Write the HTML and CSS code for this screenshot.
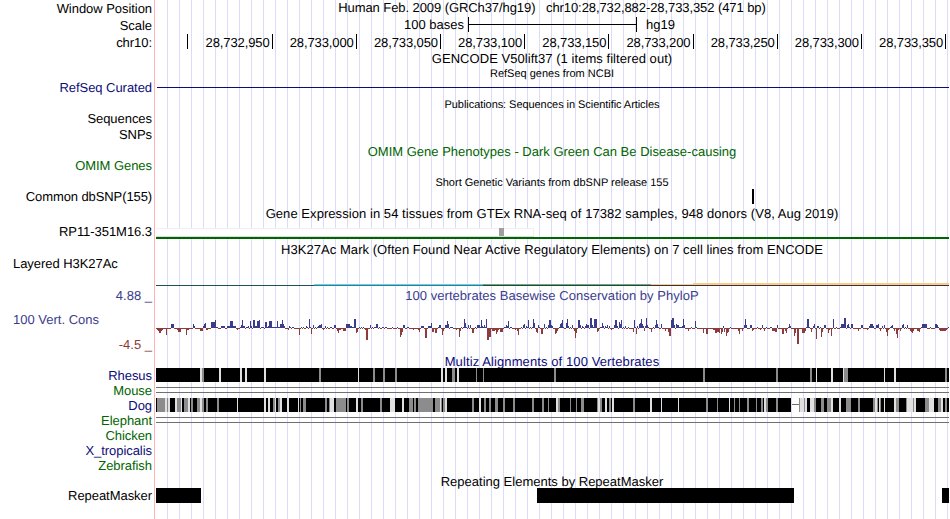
FILE: index.html
```
<!DOCTYPE html>
<html lang="en">
<head>
	<meta charset="UTF-8">
	<title>chr10:28,732,882-28,733,352</title>
	<link rel="stylesheet" href="styles.css">
</head>
<body>
	<div class="browser">
		<div class="row position">
			<div class="label">Window Position</div>
			<div class="data title">Human Feb. 2009 (GRCh37/hg19) &nbsp; chr10:28,732,882-28,733,352 (471 bp)</div>
		</div>
		<div class="row scale">
			<div class="label">Scale</div>
			<div class="data">
				<span class="bases">100 bases</span>
				<span class="scaleBar"></span>
				<span class="db">hg19</span>
			</div>
		</div>
		<div class="row ruler">
			<div class="label">chr10:</div>
			<div class="data">
				<span class="tick first"></span>
				<span class="tick">28,732,950</span>
				<span class="tick">28,733,000</span>
				<span class="tick">28,733,050</span>
				<span class="tick">28,733,100</span>
				<span class="tick">28,733,150</span>
				<span class="tick">28,733,200</span>
				<span class="tick">28,733,250</span>
				<span class="tick">28,733,300</span>
				<span class="tick">28,733,350</span>
			</div>
		</div>
		<div class="row gencode">
			<div class="label"></div>
			<div class="data title">GENCODE V50lift37 (1 items filtered out)</div>
		</div>
		<div class="row refseqTitle">
			<div class="label"></div>
			<div class="data title small">RefSeq genes from NCBI</div>
		</div>
		<div class="row refseq">
			<div class="label navy">RefSeq Curated</div>
			<div class="data"><svg id="refseq" width="794" height="15" viewBox="155 80 794 15"></svg></div>
		</div>
		<div class="row pubsTitle">
			<div class="label"></div>
			<div class="data title small">Publications: Sequences in Scientific Articles</div>
		</div>
		<div class="row sequences">
			<div class="label">Sequences</div>
		</div>
		<div class="row snps">
			<div class="label">SNPs</div>
		</div>
		<div class="row omimTitle">
			<div class="label"></div>
			<div class="data title green">OMIM Gene Phenotypes - Dark Green Can Be Disease-causing</div>
		</div>
		<div class="row omim">
			<div class="label green">OMIM Genes</div>
		</div>
		<div class="row dbsnpTitle">
			<div class="label"></div>
			<div class="data title small">Short Genetic Variants from dbSNP release 155</div>
		</div>
		<div class="row dbsnp">
			<div class="label">Common dbSNP(155)</div>
			<div class="data"><svg id="dbsnp" width="794" height="15" viewBox="155 189 794 15"></svg></div>
		</div>
		<div class="row gtexTitle">
			<div class="label"></div>
			<div class="data title">Gene Expression in 54 tissues from GTEx RNA-seq of 17382 samples, 948 donors (V8, Aug 2019)</div>
		</div>
		<div class="row gtex">
			<div class="label">RP11-351M16.3</div>
			<div class="data"><svg id="gtex" width="794" height="20" viewBox="155 222 794 20"></svg></div>
		</div>
		<div class="row h3kTitle">
			<div class="label"></div>
			<div class="data title">H3K27Ac Mark (Often Found Near Active Regulatory Elements) on 7 cell lines from ENCODE</div>
		</div>
		<div class="row h3k">
			<div class="label left">Layered H3K27Ac</div>
			<div class="data"><svg id="h3k" width="794" height="32" viewBox="155 256 794 32"></svg></div>
		</div>
		<div class="row cons">
			<div class="label consLabels">
				<div class="max blue">4.88 _</div>
				<div class="name blue">100 Vert. Cons</div>
				<div class="min red">-4.5 _</div>
			</div>
			<div class="data">
				<div class="title blue">100 vertebrates Basewise Conservation by PhyloP</div>
				<svg id="phylop" width="794" height="50" viewBox="155 304 794 50"></svg>
			</div>
		</div>
		<div class="row multizTitle">
			<div class="label"></div>
			<div class="data title navy">Multiz Alignments of 100 Vertebrates</div>
		</div>
		<div class="row species">
			<div class="label navy">Rhesus</div>
			<div class="data"><svg id="rhesus" width="794" height="15" viewBox="155 0 794 15"></svg></div>
		</div>
		<div class="row species">
			<div class="label green">Mouse</div>
			<div class="data"><div class="noAlign"></div></div>
		</div>
		<div class="row species">
			<div class="label navy">Dog</div>
			<div class="data"><svg id="dog" width="794" height="15" viewBox="155 0 794 15"></svg></div>
		</div>
		<div class="row species">
			<div class="label green">Elephant</div>
			<div class="data"><div class="noAlign"></div></div>
		</div>
		<div class="row species">
			<div class="label green">Chicken</div>
		</div>
		<div class="row species">
			<div class="label navy">X_tropicalis</div>
		</div>
		<div class="row species">
			<div class="label green">Zebrafish</div>
		</div>
		<div class="row rmskTitle">
			<div class="label"></div>
			<div class="data title">Repeating Elements by RepeatMasker</div>
		</div>
		<div class="row rmsk">
			<div class="label">RepeatMasker</div>
			<div class="data"><svg id="rmsk" width="794" height="15" viewBox="155 0 794 15"></svg></div>
		</div>
	</div>
	<script src="tracks.js"></script>
</body>
</html>
```
FILE: styles.css
```
html, body {
	margin: 0;
	padding: 0;
	background: #fff;
}
body {
	overflow: hidden;
}
.browser {
	box-sizing: border-box;
	width: 949px;
	height: 519px;
	font-family: "Liberation Sans", Arial, Helvetica, sans-serif;
	font-size: 13px;
	color: #000;
	white-space: nowrap;
	text-rendering: geometricPrecision;
	/* red separator, then a guide line every 12px */
	background:
		linear-gradient(#ffb4b4, #ffb4b4) 154px 0 / 1px 100% no-repeat,
		repeating-linear-gradient(to right, #dcdcf8 0, #dcdcf8 1px, transparent 1px, transparent 12px) 167px 0 / 782px 100% no-repeat;
}
.row {
	display: flex;
	height: 15px;
	line-height: 15px;
}
.label {
	flex: none;
	box-sizing: border-box;
	width: 155px;
	padding-right: 3px;
	letter-spacing: -0.05px;
	text-align: right;
}
.label.left {
	padding-left: 13px;
	text-align: left;
}
.data {
	flex: none;
	width: 794px;
}
.data svg {
	display: block;
	shape-rendering: crispEdges;
}
.title {
	text-align: center;
}
.small {
	font-size: 11px;
}
.navy {
	color: #0c0c78;
}
.green {
	color: #006400;
}
.blue {
	color: #3c3c8c;
}
.red {
	color: #8c3c3c;
}
.position {
	height: 16px;
	line-height: 17px;
}
.position .title {
	line-height: 15px;
	letter-spacing: -0.08px;
}
.scale {
	height: 18px;
	line-height: 19px;
}
.scale .data {
	display: flex;
	line-height: 17px;
}
.bases {
	width: 309px;
	text-align: right;
}
.scaleBar {
	box-sizing: border-box;
	width: 169px;
	height: 15px;
	margin: 1px 9px 0 4px;
	border: solid #000;
	border-width: 0 1px;
	background: linear-gradient(#000, #000) 0 7px / 100% 1px no-repeat;
}
.ruler {
	height: 17px;
	line-height: 17px;
}
.ruler .data {
	display: flex;
}
.tick {
	flex: none;
	box-sizing: border-box;
	width: 84.19px;
	height: 15px;
	padding-right: 2px;
	border-right: 1px solid #000;
	letter-spacing: -0.1px;
	text-align: right;
}
.tick.first {
	width: 33.4px;
}
.gencode .title {
	letter-spacing: 0.05px;
}
.refseqTitle {
	height: 14px;
	line-height: 16px;
}
.pubsTitle {
	height: 16px;
	line-height: 20px;
	letter-spacing: -0.06px;
}
.snps {
	height: 16px;
	line-height: 17px;
}
.omimTitle {
	height: 16px;
	line-height: 19px;
}
.dbsnpTitle {
	height: 16px;
	line-height: 20px;
}
.dbsnp .label {
	letter-spacing: -0.1px;
}
.gtexTitle {
	height: 18px;
	line-height: 19px;
	letter-spacing: 0.06px;
}
.gtex {
	height: 20px;
	line-height: 19px;
}
.h3kTitle {
	height: 14px;
	letter-spacing: 0.05px;
}
.h3k {
	height: 32px;
}
.cons {
	height: 66px;
}
.cons .title {
	height: 16px;
	letter-spacing: 0.03px;
}
.consLabels {
	display: flex;
	flex-direction: column;
	letter-spacing: 0;
}
.consLabels .max {
	height: 16px;
}
.consLabels .name {
	height: 32px;
	padding-left: 13px;
	line-height: 31px;
	text-align: left;
}
.consLabels .min {
	line-height: 18px;
}
.multizTitle {
	height: 14px;
	letter-spacing: 0.1px;
}
.noAlign {
	height: 4px;
	margin: 4px 0 0 1px;
	border: solid #707070;
	border-width: 1px 0;
}
.rmskTitle {
	line-height: 17px;
}
```
FILE: tracks.js
```
var SVG = "http://www.w3.org/2000/svg";

function box(id, x, y, w, h, color) {
	var r = document.createElementNS(SVG, "rect");
	r.setAttribute("x", x);
	r.setAttribute("y", y);
	r.setAttribute("width", w);
	r.setAttribute("height", h);
	r.setAttribute("fill", color);
	document.getElementById(id).appendChild(r);
}

// "x,width" pairs separated by spaces
function stripes(id, list, color, height) {
	list.split(" ").forEach(function(item) {
		var p = item.split(",");
		box(id, +p[0], 0, +p[1], height, color);
	});
}

box("refseq", 157, 87, 792, 1, "#0c0c78");
box("dbsnp", 752, 189, 2, 15, "#000");

box("gtex", 156, 228, 378, 9, "#f0f0f0");
box("gtex", 156, 229, 377, 7, "#fff");
box("gtex", 156, 236, 378, 1, "#dcdcdc");
box("gtex", 499, 228, 5, 8, "#a0a0a0");
box("gtex", 156, 237, 793, 2, "#006400");

box("h3k", 156, 285, 158, 1, "#205058");
box("h3k", 314, 284, 169, 1, "#66ccff");
box("h3k", 314, 285, 169, 1, "#308080");
box("h3k", 483, 284, 168, 1, "#70a870");
box("h3k", 483, 285, 168, 1, "#204848");
box("h3k", 651, 284, 42, 1, "#ffcc78");
box("h3k", 693, 283, 256, 2, "#ffcc78");
box("h3k", 651, 285, 298, 1, "#303058");

// PhyloP scores: "x,height" or "x-x2,height", everything else sits just below zero
var scores = "157,-2 158,-3 159-160,-5 161,-3 162,-2 166,-7 171-173,4 177,-2 178-180,-4 186,-7 187-188,-2 193,4 194,2 " +
	"200-202,-3 203,2 204,4 205,5 206-207,-2 211-214,6 215,8 216-217,1 221-224,2 227-229,2 230-232,7 233-235,2 237,-2 240,1 " +
	"241,3 242,8 243-244,2 246-247,1 248,2 250,7 251,2 253-254,8 255-256,2 257-258,7 259,8 261-263,1 265-266,6 267,1 " +
	"268,2 269-271,7 272-276,1 277,7 278-279,1 280-281,4 282,8 283,4 284,2 288,-2 289,2 290,1 292-293,1 299,-7 301,1 303,1 " +
	"306,2 307,1 309,9 310,1 311,-6 313,3 315,1 317,1 318,2 319-320,3 321,4 323,-2 325,2 327,1 330-331,1 334-335,3 337,-3 " +
	"338,-5 339-340,-2 343-345,-3 346-349,4 350-351,2 352-353,1 354-355,9 356,-5 357,-4 359,1 361,1 363,1 365,-2 366-367,-12 " +
	"370,3 372,1 374-375,1 376-377,4 379,1 382-383,1 385-386,1 392,1 397,1 400,-9 401,-7 402,-4 403-404,3 407-408,1 413,-2 " +
	"418,-2 419,-4 421-423,2 425-426,-10 428-430,2 431,5 432-433,-4 435-436,-5 438,1 439-440,3 442,-7 443,-3 445-446,3 " +
	"447,7 448,4 450-452,1 456,-2 459,-9 460,-3 461,1 463,1 464,9 465,5 466,1 468,3 470,3 472-473,-5 475,1 477-479,3 480,1 481,8 " +
	"482,2 483,1 484,3 485,1 486,9 487-488,-12 489-490,-9 492-494,-3 495,-2 496,-6 497,-4 498,-2 500-501,-4 502,-4 504-505,1 " +
	"506,3 507,2 508,7 510-511,1 515,-2 517,-3 518,-7 521,1 523,3 524,4 526,2 527,1 528,8 530,1 532,1 533,9 534,5 536,-4 " +
	"537,-5 538,3 539,1 541-542,-6 544,4 546,1 548,3 549,8 550,8 551,3 552,2 555,-6 556,-5 557,-3 559,1 560,4 561,5 562,8 " +
	"563,1 566,5 567,9 568,2 570,1 572,3 574,-3 575,-10 576,-5 578-579,8 580,3 582,2 583,1 585,2 586,4 587-588,3 590-591,10 " +
	"592,3 593,1 594-596,9 597,-4 598,-3 600-601,1 602,5 603,2 605,2 606,1 607,3 609,2 611,-2 614,3 615-616,8 617,2 619,6 " +
	"620,4 621,8 623,1 625,2 628,1 633,-4 634,8 635,1 636,-6 637,2 639,4 640,5 641,9 642,4 643,2 644,-3 645,2 646,10 647,3 648,1 " +
	"651,-4 653,1 655,3 656,8 657,4 658,1 661,4 665,-3 668,-4 669-670,-8 671,8 672-673,10 674,3 676,4 677-678,3 679-681,1 " +
	"682,2 683,9 684,3 688,-3 691,1 695,7 696,1 703,-5 706-707,-6 713-714,-2 715-716,-5 717-718,-4 719,-5 721,-6 722,-4 " +
	"723,2 724,-4 726,-8 727,-5 728,-4 730,1 738,-3 739,-6 742,-3 744,3 745,9 746,3 750-751,3 752,-3 753,-2 757,1 760,-2 762,3 " +
	"764,-3 766,1 770-771,1 772-774,-3 775-776,-4 777,3 782-783,-6 785,-3 786,-5 788,1 789,4 790,2 794,-8 795,-5 797-798,-16 " +
	"802-804,-5 805,-3 806,1 807-808,9 809,1 811,-4 813,2 814,4 816,-11 817-818,2 820,1 821,-9 822,-4 824-825,3 828,-5 829,-2 " +
	"831,-8 833,9 836,1 840,1 841-843,4 844-845,10 847,3 848,4 849,1 851-852,4 858,-3 861,3 862,3 867,-2 869,2 870-872,4 873,2 " +
	"876-877,3 878,4 880,-3 882,2 884,3 886,-4 887,-8 888,-2 890,1 891,2 892,3 894,-3 896,-6 897,-10 898,-2 900,-3 902,3 903,4 " +
	"905,1 907,3 910,-3 911,-4 912,-5 913,-3 917-918,-3 919,-4 921,1 922-926,4 930,1 935,4 936,4 937,3 938,1 939,-2 940-945,-3 " +
	"946,-2 948,1";

var heights = {};
scores.split(" ").forEach(function(item) {
	var p = item.split(",");
	var x = p[0].split("-");
	for (var i = +x[0]; i <= +(x[1] || x[0]); i ++) {
		heights[i] = +p[1];
	}
});
for (var i = 156; i < 949; i ++) {
	var h = heights[i] || -1;
	if (h > 0) {
		box("phylop", i, 328 - h, 1, h, "#3c3c8c");
	} else {
		box("phylop", i, 328, 1, -h, "#8c3c3c");
	}
}

box("rhesus", 156, 0, 793, 14, "#000");
stripes("rhesus", "200,2 219,2 240,2 245,2 264,2 358,1 441,2 445,2 457,2 816,1 831,2 843,1 884,1 894,2", "#e0e0e0", 14);
stripes("rhesus", "202,2 319,2 373,2 383,2 395,2 452,3 476,1 483,1 554,2 703,2 776,2 810,2 844,4 945,2", "#8c8c8c", 14);

box("dog", 156, 0, 635, 14, "#000");
box("dog", 792, 6, 7, 1, "#707070");
box("dog", 799, 0, 150, 14, "#000");
stripes("dog", "165,2 168,2 175,2 181,1 188,2 200,2 237,1 264,2 268,2 275,1 280,2 287,2 298,1 330,4 356,2 390,5 402,2 " +
	"440,1 445,2 479,2 556,2 598,2 605,2 612,2 650,2 661,1 678,1 729,1 764,2 800,4 805,2 810,4 831,2 839,2 875,2 879,1 " +
	"884,1 894,2 907,6 914,2 929,5 941,2", "#e0e0e0", 14);
stripes("dog", "157,8 167,1 177,4 184,4 191,2 197,3 202,2 206,2 217,2 273,2 278,2 300,1 303,3 325,2 329,1 336,10 347,2 361,2 " +
	"380,2 409,4 414,2 418,15 435,5 441,1 443,2 472,2 484,2 489,2 495,3 503,2 513,2 532,2 542,2 548,1 558,2 570,1 576,1 " +
	"581,3 597,1 600,2 609,2 633,2 706,2 717,1 734,1 739,1 747,2 756,1 761,2 766,2 776,2 799,1 804,1 814,2 821,3 827,4 " +
	"846,5 858,2 873,2 877,1 880,1 896,3 906,1 913,1 925,4 938,3 945,2", "#8c8c8c", 14);

stripes("rmsk", "156,45 537,257 942,7", "#000", 15);
```
